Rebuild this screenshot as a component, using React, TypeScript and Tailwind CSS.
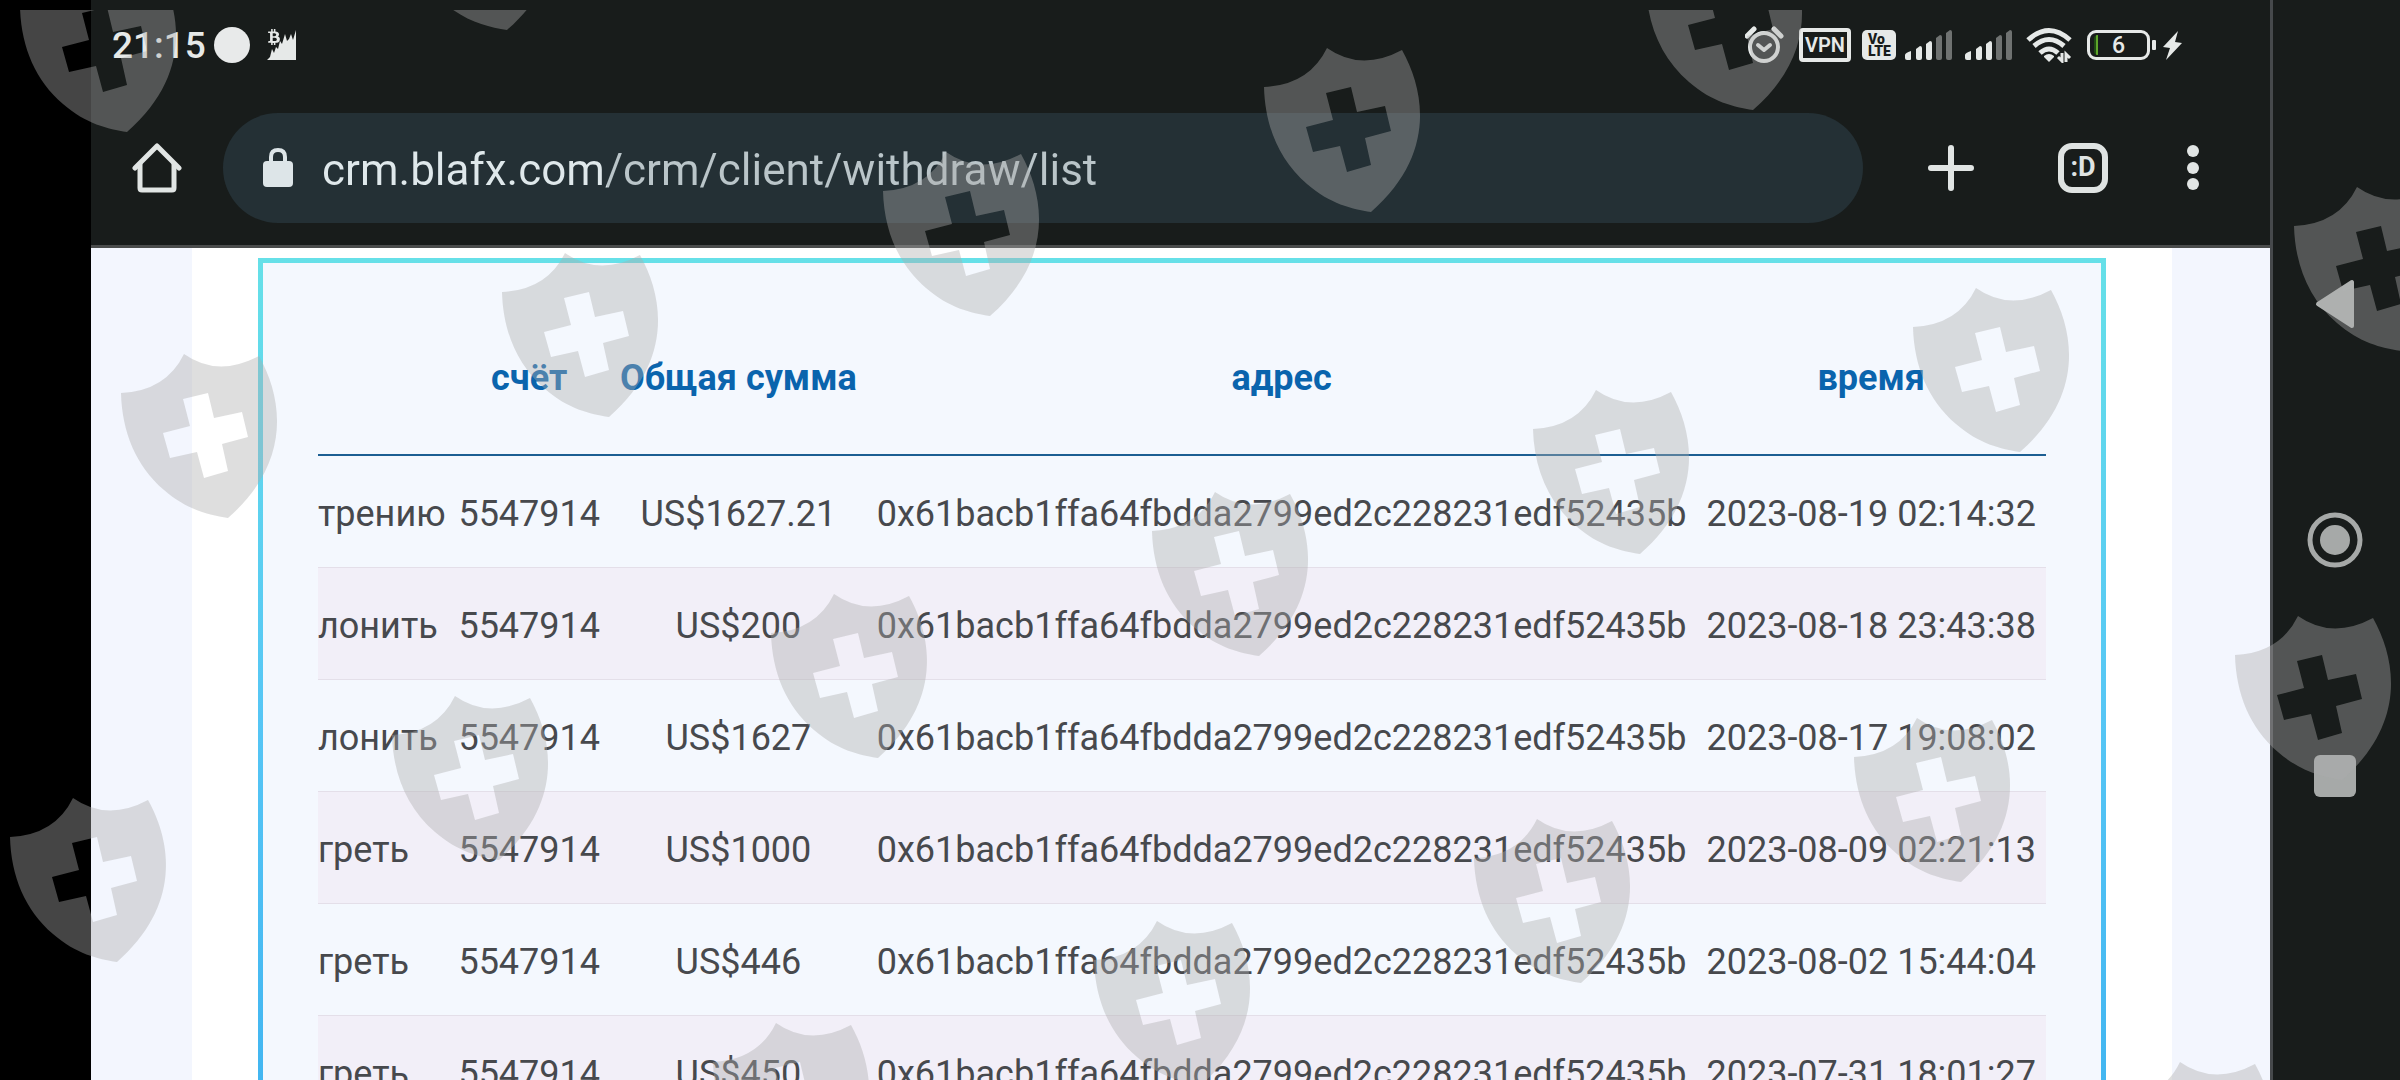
import { FaBtc } from "react-icons/fa";

const rows = [
  ["трению", "5547914", "US$1627.21", "2023-08-19 02:14:32"],
  ["лонить", "5547914", "US$200", "2023-08-18 23:43:38"],
  ["лонить", "5547914", "US$1627", "2023-08-17 19:08:02"],
  ["греть", "5547914", "US$1000", "2023-08-09 02:21:13"],
  ["греть", "5547914", "US$446", "2023-08-02 15:44:04"],
  ["греть", "5547914", "US$450", "2023-07-31 18:01:27"],
];

const wallet = "0x61bacb1ffa64fbdda2799ed2c228231edf52435b";

const shields = [
  [20, -32], [400, -134], [1646, -54], [1264, 48], [883, 152], [502, 253], [121, 354],
  [2294, 187], [1913, 288], [1533, 390], [1152, 492], [771, 594], [392, 696], [10, 798],
  [2235, 616], [1854, 718], [1474, 819], [1094, 921], [713, 1023], [2117, 1062],
];

function Watermark() {
  return (
    <svg aria-hidden="true" className="pointer-events-none absolute inset-0 h-full w-full">
      <defs>
        <clipPath id="below-edge">
          <rect x="0" y="10" width="100%" height="100%" />
        </clipPath>
        <path
          id="shield"
          fillRule="evenodd"
          d="M0 39Q45 37 63 0Q97 24 138 2C162 45 171 108 107 164C88 161 66 156 43 136C15 112 1 78 0 39ZM62 45L69 72L42 79L49 104L76 98L83 124L107 117L101 90L127 83L121 58L93 64L87 39Z"
        />
      </defs>
      <g clipPath="url(#below-edge)" fill="#adadad" fillOpacity="0.4">
        {shields.map(([x, y]) => (
          <use key={x + "-" + y} href="#shield" x={x} y={y} />
        ))}
      </g>
    </svg>
  );
}

function Signal({ className }: { className: string }) {
  return (
    <svg className={className} height="32" viewBox="0 0 48 32" preserveAspectRatio="xMinYMid">
      <g fill="#e6e9e8">
        <path d="M0 26Q0 24 6 22V30Q6 31 5 31H2Q0 31 0 29Z" />
        <path d="M11 20L15 17Q17 17 17 19V29Q17 31 15 31H13Q11 31 11 29Z" />
        <path d="M21 15L25 12Q27 12 27 14V29Q27 31 25 31H23Q21 31 21 29Z" />
      </g>
      <g fill="#6f7271">
        <path d="M31 9L35 6Q37 6 37 8V29Q37 31 35 31H33Q31 31 31 29Z" />
        <path d="M41 4L45 1Q47 1 47 3V29Q47 31 45 31H43Q41 31 41 29Z" />
      </g>
    </svg>
  );
}

function StatusBar() {
  return (
    <div className="flex h-[90px] shrink-0 items-center justify-between pr-[88px] pl-[21px]">
      <div className="flex items-center gap-2">
        <span className="text-[37px] leading-none font-medium text-[#e6e9e8]">21:15</span>
        <span className="size-9 rounded-full bg-[#e8eaea]" />
        <svg className="ml-2" width="32" height="32" viewBox="0 0 32 32" fill="#e6e9e8">
          <FaBtc x="0" y="0" size={16} color="#e6e9e8" fill="#e6e9e8" />
          <path d="M1 31L4 28L6 20L8 24L10 18L12 20L14 12L16 15L19 5L21 12L23 10L25 5L27 11L30 1V31Z" />
        </svg>
      </div>
      <div className="flex items-center gap-2">
        <svg width="46" height="38" viewBox="0 0 46 38" fill="none" stroke="#e6e9e8">
          <circle cx="19" cy="21" r="14" strokeWidth="4" />
          <path d="M13 19L19 24L25 19" strokeWidth="4" strokeLinecap="round" strokeLinejoin="round" />
          <path d="M2 10L9 3M36 10L29 3" strokeWidth="5" strokeLinecap="round" />
        </svg>
        <div className="w-[55px]">
          <div className="flex h-[34px] w-[52px] items-center justify-center rounded-[4px] border-4 border-[#e6e9e8] text-[20px] leading-none font-semibold text-[#e6e9e8]">
            VPN
          </div>
        </div>
        <div className="w-[35px]">
          <div className="flex h-[30px] w-[34px] flex-col justify-center rounded-[5px] bg-[#e6e9e8] pl-1.5 text-[14px] leading-3 font-black text-[#181c1b]">
            <span>Vo</span>
            <span>LTE</span>
          </div>
        </div>
        <Signal className="w-[52px]" />
        <Signal className="w-[53px]" />
        <svg width="53" height="36" viewBox="0 0 53 36" fill="none">
          <g stroke="#e6e9e8" strokeWidth="5" strokeLinecap="butt">
            <path d="M2 13Q23 -6 44 13" />
            <path d="M8 19Q23 6 38 19" />
            <path d="M14 26Q23 18 32 26" />
          </g>
          <path d="M18 29Q23 25 28 29V30L23 35L18 30Z" fill="#e6e9e8" />
          <path d="M36 26V34L32 30M40 35V27L44 31" stroke="#e6e9e8" strokeWidth="3" />
        </svg>
        <div className="flex items-center">
          <div className="flex h-[30px] w-[63px] items-center justify-center rounded-[9px] border-[3px] border-[#e6e9e8] text-[23px] leading-none font-medium text-[#e6e9e8]">
            <span className="ml-1 h-5 w-1 rounded-l-full border-r-2 border-[#5fa62b] bg-[#1f4a14]" />
            <span className="grow pr-2 text-center">6</span>
          </div>
          <svg width="32" height="32" viewBox="0 0 32 32" fill="#e6e9e8">
            <rect x="2" y="11" width="4" height="10" rx="1" />
            <path d="M28 2L13 18L20 19L16 31L32 14L25 13Z" />
          </svg>
        </div>
      </div>
    </div>
  );
}

function Toolbar() {
  return (
    <div className="flex h-[158px] shrink-0 items-center border-b-3 border-[#4a4c4c] pr-[52px] pl-[41px]">
      <button aria-label="Home" className="mr-[41px]">
        <svg width="50" height="50" viewBox="0 0 50 50" fill="none" stroke="#e1e5e4" strokeWidth="5" strokeLinecap="round" strokeLinejoin="round">
          <path d="M3 25L25 3L47 25" />
          <path d="M8 21V45Q8 47 10 47H40Q42 47 42 45V21" />
        </svg>
      </button>
      <label className="flex h-[110px] grow items-center rounded-full bg-[#243035] pl-10">
        <svg className="mr-7" width="31" height="40" viewBox="0 0 31 40" aria-hidden="true">
          <rect x="0" y="13" width="30" height="26" rx="4" fill="#dde5e8" />
          <path d="M8 14V9Q8 2 15 2Q22 2 22 9V14" fill="none" stroke="#dde5e8" strokeWidth="4" />
        </svg>
        <input
          aria-label="Address"
          defaultValue="crm.blafx.com/crm/client/withdraw/list"
          className="min-w-0 grow bg-linear-to-r from-[#dfe8eb] from-[285px] to-[#bac5c9] to-[285px] bg-clip-text pt-1 text-[44px] leading-[60px] text-transparent outline-none"
        />
      </label>
      <button aria-label="New tab" className="ml-[63px]">
        <svg width="50" height="50" viewBox="0 0 50 50" stroke="#e1e5e4" strokeWidth="6" strokeLinecap="round">
          <path d="M25 5V45M5 25H45" />
        </svg>
      </button>
      <button
        aria-label="Tabs"
        className="ml-[82px] flex size-[50px] items-center justify-center rounded-[14px] border-6 border-[#dfe3e2] text-[27px] leading-none font-bold text-[#dfe3e2]"
      >
        :D
      </button>
      <button aria-label="Menu" className="ml-[60px]">
        <svg width="50" height="50" viewBox="0 0 50 50" fill="#e1e5e4">
          <circle cx="25" cy="8" r="6" />
          <circle cx="25" cy="25" r="6" />
          <circle cx="25" cy="41" r="6" />
        </svg>
      </button>
    </div>
  );
}

function WithdrawTable() {
  return (
    <table className="w-full border-separate border-spacing-0 text-center text-[36px] leading-10 whitespace-nowrap text-[#47494d]">
      <thead>
        <tr className="h-[154px] text-[#0a64ad]">
          <th className="w-full border-b-2 border-[#1c5f93]" aria-label="статус" />
          <th className="border-b-2 border-[#1c5f93] px-2.5">счёт</th>
          <th className="border-b-2 border-[#1c5f93] px-2.5">Общая сумма</th>
          <th className="border-b-2 border-[#1c5f93] px-2.5">адрес</th>
          <th className="border-b-2 border-[#1c5f93] px-2.5">время</th>
        </tr>
      </thead>
      <tbody>
        {rows.map(([status, account, amount, time]) => (
          <tr key={time} className="h-28 even:bg-[#f2eff8]">
            <td className="border-b border-[#e4dfe9] pt-1 text-left">{status}</td>
            <td className="border-b border-[#e4dfe9] px-2.5 pt-1">{account}</td>
            <td className="border-b border-[#e4dfe9] px-2.5 pt-1">{amount}</td>
            <td className="border-b border-[#e4dfe9] px-2.5 pt-1">{wallet}</td>
            <td className="border-b border-[#e4dfe9] px-2.5 pt-1">{time}</td>
          </tr>
        ))}
      </tbody>
    </table>
  );
}

export default function App() {
  return (
    <div className="relative flex h-screen overflow-hidden bg-black pl-[91px] font-['Roboto',sans-serif]">
      <div className="flex min-w-0 grow flex-col bg-[#181c1b]">
        <StatusBar />
        <Toolbar />
        <main className="flex min-h-0 grow overflow-hidden bg-[#f3f6fe] pr-[98px] pl-[101px]">
          <div className="min-w-0 grow bg-white px-[66px] pt-2.5">
            <div className="bg-linear-to-b from-[#66e0e8] via-[#56c6f5] to-[#3db2f0] p-[5px]">
              <section className="overflow-hidden bg-[#f4f8fe] px-[55px] pt-[39px] pb-10">
                <WithdrawTable />
              </section>
            </div>
          </div>
        </main>
      </div>
      <nav className="flex w-[130px] shrink-0 flex-col items-center justify-center gap-44 border-l-3 border-[#46494c] bg-[#181c1b] pr-1">
        <button aria-label="Back" className="size-[60px]">
          <svg viewBox="0 0 60 60" fill="#afb2b1" stroke="#afb2b1" strokeWidth="4" strokeLinejoin="round">
            <path d="M13 30L47 8V52Z" />
          </svg>
        </button>
        <button aria-label="Home screen" className="size-[60px]">
          <svg viewBox="0 0 60 60" fill="#a6a9a8">
            <circle cx="30" cy="30" r="25" fill="none" stroke="#a6a9a8" strokeWidth="5" />
            <circle cx="30" cy="30" r="15" />
          </svg>
        </button>
        <button aria-label="Recent apps" className="size-[60px]">
          <svg viewBox="0 0 60 60" fill="#a6a9a8">
            <rect x="9" y="9" width="42" height="42" rx="6" />
          </svg>
        </button>
      </nav>
      <Watermark />
    </div>
  );
}
